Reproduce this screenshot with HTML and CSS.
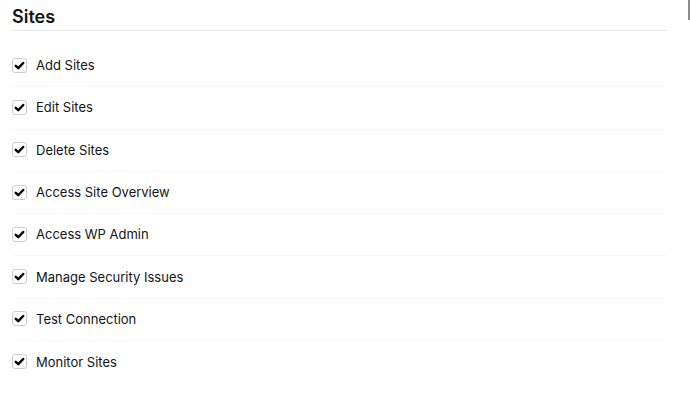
FILE: index.html
```html
<!DOCTYPE html>
<html lang="en">

<head>
    <meta charset="UTF-8">
    <title>Sites</title>
    <link rel="stylesheet" href="styles.css">
</head>

<body>
    <div class="panel">
        <h2 class="section-title">Sites</h2>
        <ul class="perm-list">
            <li class="perm"><span class="check"><svg viewBox="0 0 16 16"><path d="M3.4 8.4 6.5 11.3 12.6 4.9"/></svg></span>Add Sites</li>
            <li class="perm"><span class="check"><svg viewBox="0 0 16 16"><path d="M3.4 8.4 6.5 11.3 12.6 4.9"/></svg></span>Edit Sites</li>
            <li class="perm"><span class="check"><svg viewBox="0 0 16 16"><path d="M3.4 8.4 6.5 11.3 12.6 4.9"/></svg></span>Delete Sites</li>
            <li class="perm"><span class="check"><svg viewBox="0 0 16 16"><path d="M3.4 8.4 6.5 11.3 12.6 4.9"/></svg></span>Access Site Overview</li>
            <li class="perm"><span class="check"><svg viewBox="0 0 16 16"><path d="M3.4 8.4 6.5 11.3 12.6 4.9"/></svg></span>Access WP Admin</li>
            <li class="perm"><span class="check"><svg viewBox="0 0 16 16"><path d="M3.4 8.4 6.5 11.3 12.6 4.9"/></svg></span>Manage Security Issues</li>
            <li class="perm"><span class="check"><svg viewBox="0 0 16 16"><path d="M3.4 8.4 6.5 11.3 12.6 4.9"/></svg></span>Test Connection</li>
            <li class="perm"><span class="check"><svg viewBox="0 0 16 16"><path d="M3.4 8.4 6.5 11.3 12.6 4.9"/></svg></span>Monitor Sites</li>
        </ul>
    </div>
    <div class="scroll-thumb"></div>
</body>

</html>
```

FILE: styles.css
```css
* {
    box-sizing: border-box;
    margin: 0;
    padding: 0;
}

body {
    font-family: Inter, "Noto Sans", sans-serif;
    color: #141416;
    background: #fff;
}

.panel {
    width: 667px;
    padding-left: 12px;
}

.section-title {
    font-size: 18px;
    font-weight: 600;
    line-height: 22px;
    padding-top: 6px;
    padding-bottom: 2px;
    border-bottom: 1px solid #e6e6e6;
}

.perm-list {
    list-style: none;
    padding-top: 14px;
}

.perm {
    display: flex;
    align-items: center;
    height: 42.3px;
    border-bottom: 1px solid #f8f8f8;
    font-size: 13px;
    padding-bottom: 1px;
}

.perm:last-child {
    border-bottom: none;
}

.check {
    width: 15px;
    height: 15px;
    border: 1px solid #cdcdcd;
    border-radius: 3px;
    margin-right: 9px;
    display: flex;
    align-items: center;
    justify-content: center;
    background: #fff;
}

.check svg {
    width: 13px;
    height: 13px;
    fill: none;
    stroke: #000;
    stroke-width: 3;
    stroke-linecap: round;
    stroke-linejoin: round;
}

/* scrollbar thumb at the right edge */
.scroll-thumb {
    position: absolute;
    top: 0;
    right: 0;
    width: 2px;
    height: 20px;
    background: #8a8a8a;
}
```
